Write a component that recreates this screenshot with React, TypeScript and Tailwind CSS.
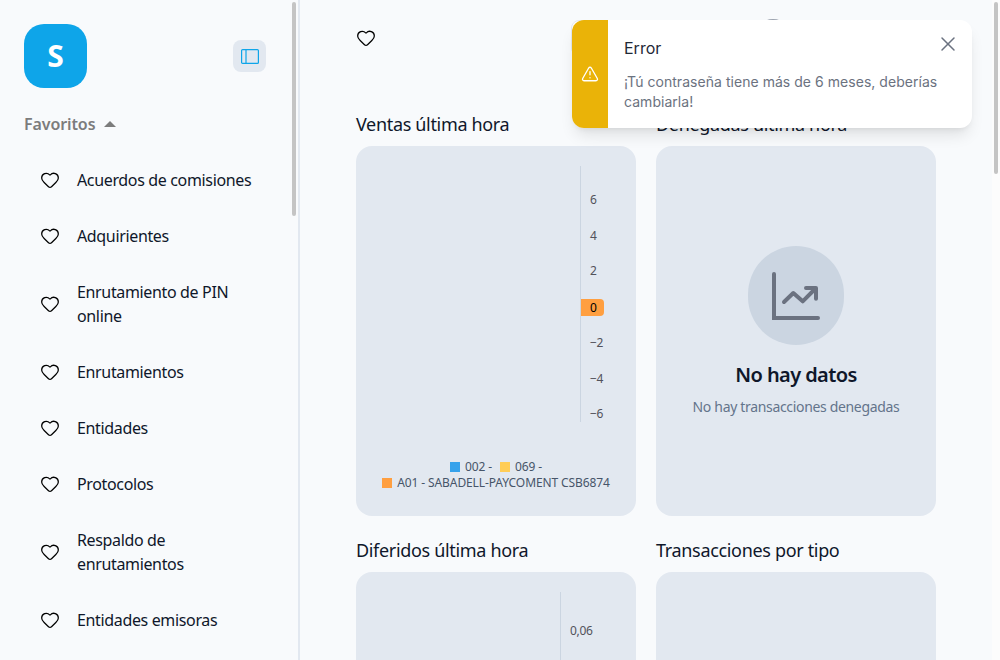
import React from 'react';
import { Heart, TriangleAlert, X } from 'lucide-react';

const favoritos = [
  'Acuerdos de comisiones',
  'Adquirientes',
  'Enrutamiento de PIN online',
  'Enrutamientos',
  'Entidades',
  'Protocolos',
  'Respaldo de enrutamientos',
  'Entidades emisoras',
];

const ejeVentas = ['6', '4', '2', '0', '−2', '−4', '−6'];

const Sidebar = () => (
  <aside className="relative w-[300px] h-[660px] shrink-0 border-r-2 border-[#e2e8f0] overflow-hidden">
    <div className="pl-6 pr-8 pt-6 flex items-center justify-between">
      <div className="w-[63px] h-16 rounded-[20px] bg-[#0ea5e9] flex items-center justify-center text-white text-3xl font-bold">S</div>
      <button className="w-[33px] h-8 rounded-lg bg-[#e2e8f0] flex items-center justify-center text-[#0ea5e9]">
        <svg width="18" height="15" viewBox="0 0 18 15" fill="none" stroke="currentColor" strokeWidth="1.2">
          <rect x="0.6" y="0.6" width="16.8" height="13.8" rx="1" />
          <path d="M5 0.6v13.8" />
        </svg>
      </button>
    </div>
    <div className="pl-6 mt-6 flex items-center gap-[9px] text-[#7c7c7c] font-semibold leading-6 tracking-[-0.1px]">
      <span>Favoritos</span>
      <span className="w-0 h-0 border-x-[6px] border-x-transparent border-b-[6px] border-b-[#7c7c7c]" />
    </div>
    <ul className="mt-4 pl-10 pr-8 tracking-[-0.35px]">
      {favoritos.map((item) => (
        <li key={item} className="flex items-center gap-[17px] py-4">
          <Heart size={20} strokeWidth={1.5} className="shrink-0 text-black" />
          <span className="leading-6 text-[#0f172a]">{item}</span>
        </li>
      ))}
    </ul>
    <div className="absolute right-[2px] top-[2px] w-[4px] h-[214px] rounded-full bg-[#c4c4c4]" />
  </aside>
);

const Ventas = () => (
  <div className="w-[280px] h-[370px] rounded-2xl bg-[#e2e8f0] flex flex-col">
    <div className="ml-[224px] mt-5 h-64 w-[30px] border-l border-[#cbd5e1] flex flex-col justify-between text-xs text-[#52525b] pt-[26px]">
      {ejeVentas.map((n) =>
        n === '0' ? (
          <span key={n} className="w-[23px] h-[17px] rounded-r-sm bg-[#ff9f40] text-black pl-[9px] leading-[17px]">{n}</span>
        ) : (
          <span key={n} className="pl-[9px] leading-4">{n}</span>
        )
      )}
    </div>
    <div className="mt-[37px] text-xs leading-4 text-[#475569] tracking-[-0.1px] flex flex-col items-center">
      <div className="flex items-center">
        <span className="w-[10px] h-[10px] bg-[#36a2eb] mr-[5px]" />
        <span>002 -</span>
        <span className="w-[10px] h-[10px] bg-[#ffcd56] ml-2 mr-[5px]" />
        <span>069 -</span>
      </div>
      <div className="flex items-center">
        <span className="w-[10px] h-[10px] bg-[#ff9f40] mr-[5px]" />
        <span>A01 - SABADELL-PAYCOMENT CSB6874</span>
      </div>
    </div>
  </div>
);

const SinDatos = () => (
  <div className="w-[280px] h-[370px] rounded-2xl bg-[#e2e8f0] flex flex-col items-center justify-center pt-[1px]">
    <div className="w-24 h-[99px] rounded-full bg-[#cbd5e1] flex items-center justify-center">
      <svg width="48" height="48" viewBox="0 0 48 48" fill="none" stroke="#6b7280" strokeWidth="4" strokeLinecap="round" strokeLinejoin="round">
        <path d="M2 2v44h44" strokeLinejoin="miter" />
        <path d="M12 30l9.3-9 9.4 8.3L43 17" />
        <path d="M34 16h10v10.7" />
      </svg>
    </div>
    <h3 className="mt-4 text-xl font-semibold leading-7 text-[#0f172a] tracking-[-0.6px]">No hay datos</h3>
    <p className="mt-2 text-sm leading-5 text-[#64748b] tracking-[-0.33px]">No hay transacciones denegadas</p>
  </div>
);

const Toast = () => (
  <div className="absolute left-[572px] top-5 w-[400px] h-[108px] rounded-xl bg-white shadow-lg flex overflow-hidden font-['Inter',sans-serif]">
    <div className="w-9 bg-[#eab308] flex items-center justify-center text-white">
      <TriangleAlert size={18} strokeWidth={1.75} />
    </div>
    <div className="flex-1 pl-4 pr-6 pt-4">
      <p className="text-base leading-6 text-[#1f2937]">Error</p>
      <p className="mt-3 text-sm leading-5 text-[#6b7280] tracking-[0.04px]">¡Tú contraseña tiene más de 6 meses, deberías cambiarla!</p>
    </div>
    <X size={24} strokeWidth={1.5} className="absolute right-[12px] top-[12px] text-[#6b7280]" />
  </div>
);

export default function App() {
  return (
    <div className="relative w-[1000px] h-[660px] overflow-hidden bg-[#f8fafc] flex font-['Noto_Sans',sans-serif]">
      <Sidebar />
      <main className="flex-1 pl-[56px] pt-[18px]">
        <header className="flex items-center h-10">
          <Heart size={20} strokeWidth={1.5} className="text-black" />
          <div className="ml-[195px] w-[170px] h-9 rounded-lg border border-[#e2e8f0] bg-white" />
          <div className="ml-[13px] w-[38px] h-[38px] rounded-full bg-[#9ca3af]" />
        </header>
        <div className="mt-[52px] grid grid-cols-[280px_280px] gap-x-5 tracking-[-0.33px]">
          <div>
            <h2 className="text-lg leading-7 text-[#0f172a] mb-2">Ventas última hora</h2>
            <Ventas />
          </div>
          <div>
            <h2 className="text-lg leading-7 text-[#0f172a] mb-2">Denegadas última hora</h2>
            <SinDatos />
          </div>
          <div className="mt-5">
            <h2 className="text-lg leading-7 text-[#0f172a] mb-2">Diferidos última hora</h2>
            <div className="h-64 rounded-2xl bg-[#e2e8f0] pt-5 pl-[204px]">
              <div className="h-full border-l border-[#cbd5e1] pl-[9px] pt-[31px] text-xs leading-4 text-[#52525b]">0,06</div>
            </div>
          </div>
          <div className="mt-5">
            <h2 className="text-lg leading-7 text-[#0f172a] mb-2">Transacciones por tipo</h2>
            <div className="h-64 rounded-2xl bg-[#e2e8f0]" />
          </div>
        </div>
      </main>
      <Toast />
      <div className="absolute right-0 top-0 w-2 h-full bg-[#fcfcfc]" />
      <div className="absolute right-[2px] top-[2px] w-[4px] h-[172px] rounded-full bg-[#c4c4c4]" />
    </div>
  );
}
